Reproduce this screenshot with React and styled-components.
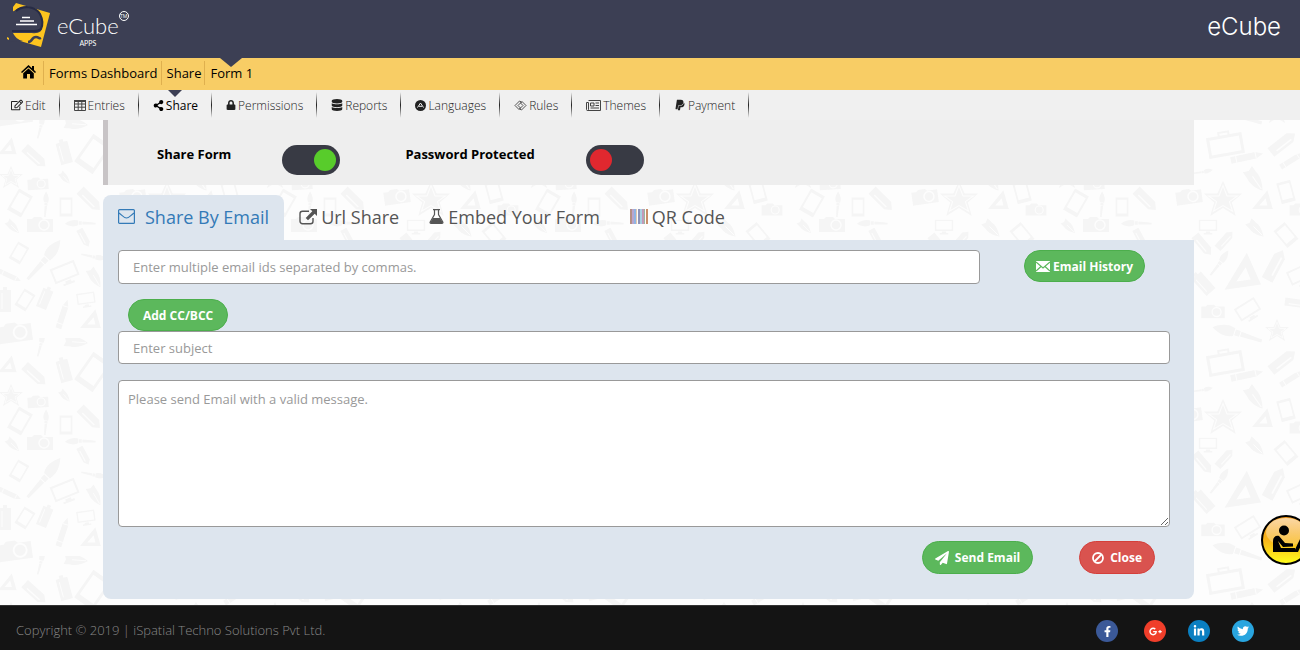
import React from "react";
import styled, { createGlobalStyle } from "styled-components";
import {
  FaRegEdit,
  FaShareAlt,
  FaLock,
  FaDatabase,
  FaPaypal,
  FaPaperPlane,
  FaFacebookF,
  FaGooglePlusG,
  FaLinkedinIn,
  FaTwitter,
} from "react-icons/fa";

const GlobalStyle = createGlobalStyle`
  * {
    box-sizing: border-box;
  }

  body {
    margin: 0;
    background: #fdfdfd;
    font-family: "Open Sans", "Liberation Sans", sans-serif;
    font-size: 13px;
    color: #000;
  }

  a {
    color: inherit;
    text-decoration: none;
  }

  input, textarea, button {
    font-family: inherit;
  }
`;

const Page = styled.div`
  position: relative;
  display: flex;
  flex-direction: column;
  min-height: 100vh;
  overflow: hidden;
`;

/* header */

const Header = styled.header`
  display: flex;
  justify-content: space-between;
  height: 58px;
  padding: 0 19px 0 7px;
  background: #3c3f54;
  color: #fff;
`;

const Brand = styled.a`
  display: flex;
  align-items: flex-start;
  padding-top: 3px;
`;

const BrandText = styled.span`
  display: flex;
  flex-direction: column;
  align-items: center;
  margin-left: 6px;
  padding-top: 10px;
`;

const BrandName = styled.span`
  font-family: Lato, sans-serif;
  font-size: 22px;
  font-weight: 300;
  line-height: 26px;
`;

const BrandSub = styled.span`
  font-family: Lato, sans-serif;
  font-size: 7px;
  line-height: 9px;
`;

const TradeMark = styled.span`
  display: flex;
  align-items: center;
  justify-content: center;
  width: 10px;
  height: 10px;
  margin-top: 8px;
  border: 1px solid #fff;
  border-radius: 50%;
  font-size: 5px;
`;

const HeaderTitle = styled.h1`
  margin: 0;
  font-family: Inter, sans-serif;
  font-size: 24px;
  font-weight: 300;
  line-height: 54px;
`;

/* navigation */

const Breadcrumb = styled.nav`
  display: flex;
  align-items: flex-start;
  height: 32px;
  padding: 3px 0 0 21px;
  background: #f8cd65;
`;

const Crumb = styled.a`
  position: relative;
  display: flex;
  align-items: center;
  height: 24px;
  padding: 0 3px 0 5px;
  border-left: ${(props) => (props.$first ? "none" : "1px solid #dfb04e")};
  ${(props) => props.$first && "padding: 0 7px 2px 0;"}
`;

const Arrow = styled.span`
  position: absolute;
  left: 50%;
  top: ${(props) => (props.$small ? 0 : -3)}px;
  margin-left: -${(props) => props.$size}px;
  border: ${(props) => props.$size}px solid transparent;
  border-top: ${(props) => (props.$small ? 7 : 9)}px solid #3c3f54;
  border-bottom: none;
`;

const Menu = styled.nav`
  display: flex;
  height: 30px;
  background: #f0f0f0;
`;

const MenuItem = styled.a`
  position: relative;
  display: flex;
  align-items: center;
  gap: 2px;
  padding: 0 13px 0 14px;
  border-right: 1px solid;
  border-image: linear-gradient(#f0f0f0 10%, #222 50%, #f0f0f0 90%) 1;
  font-size: 12px;
  font-weight: ${(props) => (props.$active ? 400 : 300)};
  color: ${(props) => (props.$active ? "#000" : "#222")};

  &:first-child {
    padding-left: 11px;
  }
`;

/* body */

const Main = styled.main`
  position: relative;
  flex: 1;
  padding: 0 106px 6px 103px;
`;

const Backdrop = styled.svg`
  position: absolute;
  inset: 0;
  width: 100%;
  height: 100%;
`;

const Content = styled.div`
  position: relative;
`;

const StatusBar = styled.section`
  display: flex;
  height: 65px;
  padding: 25px 0 0 49px;
  border-left: 5px solid #c8c4c6;
  background: #eee;
`;

const Setting = styled.label`
  display: flex;
  gap: 51px;
  margin-right: 65px;
  font-weight: 700;
  line-height: 18px;
`;

const Toggle = styled.input`
  appearance: none;
  width: 58px;
  height: 30px;
  margin: 0;
  padding: 4px;
  border-radius: 15px;
  background: #383a44;

  &::before {
    content: "";
    display: block;
    width: 22px;
    height: 22px;
    border-radius: 50%;
    background: #e0282f;
  }

  &:checked::before {
    margin-left: auto;
    background: #58cc2b;
  }
`;

const Tabs = styled.div`
  display: flex;
  margin-top: 10px;
`;

const Tab = styled.button`
  display: flex;
  align-items: center;
  gap: ${(props) => (props.$active ? 10 : 4)}px;
  height: 45px;
  padding: 0 15px 2px;
  border: none;
  border-radius: 8px 8px 0 0;
  background: ${(props) => (props.$active ? "#dde5ee" : "transparent")};
  color: ${(props) => (props.$active ? "#337ab7" : "#555")};
  font-size: 18px;
  font-weight: 500;
`;

const EmailForm = styled.form`
  display: flex;
  flex-direction: column;
  padding: 10px 24px 25px 15px;
  border-radius: 0 0 8px 8px;
  background: #dde5ee;
`;

const Row = styled.div`
  display: flex;
  justify-content: ${(props) => (props.$end ? "flex-end" : "flex-start")};
  gap: ${(props) => props.$gap || 0}px;
  padding: ${(props) => props.$pad || 0};
`;

const Field = styled.input`
  flex: ${(props) => (props.$grow ? 1 : "none")};
  height: ${(props) => (props.$grow ? 34 : 33)}px;
  padding: 0 14px;
  border: 1px solid #999;
  border-radius: 4px;
  background: #fff;
  font-size: 13px;

  &::placeholder {
    color: #999;
  }
`;

const Message = styled.textarea`
  height: 147px;
  margin: 16px 0 14px;
  padding: 10px 9px;
  border: 1px solid #999;
  border-radius: 4px;
  font-size: 13px;
  line-height: 17px;
  resize: vertical;

  &::placeholder {
    color: #999;
  }
`;

const Button = styled.button`
  display: flex;
  align-items: center;
  gap: ${(props) => props.$gap || 3}px;
  height: ${(props) => (props.$tall ? 33 : 32)}px;
  padding: 0 ${(props) => props.$side || 11}px;
  border: 1px solid ${(props) => (props.$danger ? "#d43f3a" : "#4cae4c")};
  border-radius: 17px;
  background: ${(props) => (props.$danger ? "#d9534f" : "#5cb85c")};
  color: #fff;
  font-size: 12px;
  font-weight: 700;
`;

const HelpBadge = styled.a`
  position: fixed;
  right: -11px;
  bottom: 85px;
  width: 50px;
  height: 50px;
`;

/* footer */

const Footer = styled.footer`
  position: relative;
  display: flex;
  justify-content: space-between;
  height: 45px;
  padding: 0 46px 0 16px;
  border-top: 1px solid #333;
  background: #141414;
  color: #888;
  font-weight: 300;
  line-height: 48px;
`;

const Social = styled.div`
  display: flex;
  gap: 22px;
  padding-top: 14px;
`;

const SocialLink = styled.a`
  display: flex;
  align-items: center;
  justify-content: center;
  width: 22px;
  height: 22px;
  border-radius: 50%;
  background: ${(props) => props.$color};
  color: #fff;

  &:first-child {
    margin-right: 4px;
  }
`;

/* icons */

const LogoMark = () => (
  <svg width="44" height="45" viewBox="0 0 44 45" aria-hidden="true">
    <path d="M9 0 43 10 34 44 6 36V4Z" fill="#fdc41f" />
    <path d="M0 38V10L7 8C14 2 28 2 33 11c3 6 3 12 1 17-3 3-8 2-12 2H6c2 4 5 7 10 8-6 2-12 0-16 0Z" fill="#3c3f54" />
    <path d="M9 8C16 2 28 3 33 11c3 6 3 11 1 15-3 3-7 2-11 2H5" fill="none" stroke="#272b45" strokeWidth="2" />
    <path d="M21 39c5 0 3-5 8-5 3 0 3 2 5 1" fill="none" stroke="#3c3f54" strokeWidth="2.500" />
    <path d="M15 14.500h8M13 18h14M9 21.500h21" stroke="#fff" strokeWidth="1.300" />
    <path d="M0 34l2 1v2l-2-1z" fill="#fdc41f" />
  </svg>
);

const HomeIcon = () => (
  <svg width="15" height="14" viewBox="0 0 15 14" aria-hidden="true">
    <path d="M7.500 0 11 3.200V1h2v4l2 2-1 1-6.500-5.800L1 8 0 7Z" />
    <path d="m7.500 3.500 5.300 4.700V13.500H9V9H6v4.500H2.200V8.200Z" />
  </svg>
);

const TableIcon = () => (
  <svg width="12" height="11" viewBox="0 0 12 11" aria-hidden="true">
    <path d="M.5 1h11v9.500H.5ZM.5 4h11M.5 7.200h11M4.200 1v9.500M7.800 1v9.500" fill="none" stroke="#444" />
    <path d="M0 0h12v2H0z" fill="#444" />
  </svg>
);

const LanguageIcon = () => (
  <svg width="11" height="11" viewBox="0 0 11 11" aria-hidden="true">
    <circle cx="5.500" cy="5.500" r="5.500" fill="#222" />
    <path d="M2.500 7.500 5.500 3l3 4.500M4 6.300h3" fill="none" stroke="#f0f0f0" />
  </svg>
);

const RulesIcon = () => (
  <svg width="13" height="11" viewBox="0 0 13 11" aria-hidden="true">
    <path d="M5.500 1 1 5.500l4 4L6.500 8 4 5.500 7.500 2ZM7.500 10 12 5.500l-4-4L6.500 3 9 5.500 5.500 9Z" fill="none" stroke="#444" strokeWidth=".9" />
  </svg>
);

const NewsIcon = () => (
  <svg width="15" height="11" viewBox="0 0 15 11" aria-hidden="true">
    <path d="M2.500.5h12v10h-13a1 1 0 0 1-1-1v-7h2v7a1 1 0 0 1-1 1" fill="none" stroke="#444" />
    <path d="M4.500 3h3.500v3H4.500ZM9.500 3h3.500M9.500 5.500h3.500M4.500 8h8.500" fill="none" stroke="#444" />
  </svg>
);

const EnvelopeOutline = () => (
  <svg width="17" height="15" viewBox="0 0 17 15" aria-hidden="true">
    <rect x=".6" y=".6" width="15.800" height="13.800" rx="1" fill="none" stroke="#337ab7" strokeWidth="1.200" />
    <path d="M1 4c3 2 5 5 7.500 5S13 6 16 4" fill="none" stroke="#337ab7" strokeWidth="1.200" />
  </svg>
);

const ExternalIcon = () => (
  <svg width="18" height="16" viewBox="0 0 18 16" aria-hidden="true">
    <path d="M10 2.200H3.500A2.500 2.500 0 0 0 1 4.700v7.600a2.500 2.500 0 0 0 2.500 2.500h8a2.500 2.500 0 0 0 2.500-2.500V9" fill="none" stroke="#555" strokeWidth="1.400" />
    <path d="M11 0h7v7l-2.300-2.300L9 11.300 6.700 9l6.600-6.700Z" fill="#555" />
  </svg>
);

const FlaskIcon = () => (
  <svg width="15" height="15" viewBox="0 0 15 15" aria-hidden="true">
    <path d="M4 .6h7M5.500.6v5L1.200 13c-.4.800 0 1.400.8 1.400h11c.8 0 1.200-.6.8-1.400L9.500 5.600v-5" fill="none" stroke="#555" strokeWidth="1.200" />
    <path d="M4 9h7l3 5H1Z" fill="#555" />
  </svg>
);

const barColors = ["#b58f86", "#b9a6cf", "#8fb4e3", "#e3c9b0", "#8d93b8", "#a9d0e3", "#c39ab8", "#9db8a0", "#c98f6a"];

const BarcodeIcon = () => (
  <svg width="18" height="15" viewBox="0 0 18 15" aria-hidden="true">
    {barColors.map((color, i) => (
      <rect key={color} x={i * 2} width={i % 4 === 3 ? 1 : 2} height="15" fill={color} />
    ))}
  </svg>
);

const EnvelopeSolid = () => (
  <svg width="14" height="11" viewBox="0 0 14 11" aria-hidden="true">
    <path d="M0 0h14v11H0z" fill="#fff" />
    <path d="m0 1 7 6 7-6M0 10l5-4.500M14 10 9 5.500" fill="none" stroke="#5cb85c" strokeWidth="1.200" />
  </svg>
);

const BanIcon = () => (
  <svg width="12" height="12" viewBox="0 0 12 12" aria-hidden="true">
    <circle cx="6" cy="6" r="5" fill="none" stroke="#fff" strokeWidth="1.800" />
    <path d="m2.500 9.500 7-7" stroke="#fff" strokeWidth="1.800" />
  </svg>
);

const HelpIcon = () => (
  <svg width="50" height="50" viewBox="0 0 50 50" aria-hidden="true">
    <defs>
      <linearGradient id="gold" x1="0" y1="0" x2="0" y2="1">
        <stop offset="0" stopColor="#f59a1c" />
        <stop offset=".5" stopColor="#f8b51b" />
        <stop offset="1" stopColor="#ffff1c" />
      </linearGradient>
      <linearGradient id="shine" x1="0" y1="0" x2="0" y2="1">
        <stop offset="0" stopColor="#fff" stopOpacity=".6" />
        <stop offset="1" stopColor="#fff" stopOpacity=".15" />
      </linearGradient>
    </defs>
    <circle cx="25" cy="25" r="24" fill="url(#gold)" stroke="#000" strokeWidth="2" />
    <ellipse cx="25" cy="17" rx="20" ry="14" fill="url(#shine)" />
    <circle cx="23" cy="15.500" r="5" />
    <path d="M12 37V26c0-4 3-6 6-5l6 7 8 .5v3l-10 .5-5-6 3 7h14v4Z" />
    <path d="M24 34.500h10L40 22h4l-7 15H24Z" />
  </svg>
);

/* doodle wallpaper: [kind, x, y, rotation, scale] */

const shapes = {
  camera: (
    <>
      <path d="M-13-6h5l2-2h7l2 2h10V7h-26Z" />
      <circle cx="4" cy="0" r="5" fill="none" stroke="#fdfdfd" strokeWidth="1.500" />
    </>
  ),
  tablet: <path fillRule="evenodd" d="M-8-12H8v24H-8ZM-6-9v17H6V-9Z" />,
  star: (
    <>
      <path d="m0-12 3.500 8H12L5.500 1.500 8 10 0 5-8 10l2.500-8.500L-12-4h8.500Z" />
      <path d="m0-9 2.500 6.500H9L4 1l2 6-6-3.500L-6 7l2-6-5-3.500h6.500Z" fill="none" stroke="#fdfdfd" strokeWidth=".7" />
    </>
  ),
  nib: (
    <>
      <path d="M-12-5l7 0C0-6 6-4 12 0 6 4 0 6-5 5h-7l2-5Z" />
      <path d="M-4 0H10" stroke="#fdfdfd" />
    </>
  ),
  marker: (
    <>
      <path d="M-14-5H8l6 5-6 5h-22Z" />
      <path d="M-9 2H8" stroke="#fdfdfd" strokeWidth="1.500" />
    </>
  ),
  brush: <path d="M-26-1.500-4-2.500v5l-22-1ZM-3-3h5v6h-5ZM3-4c8-4 14-2 22 2C18 4 10 6 3 4Z" />,
  pencil: (
    <>
      <path d="M-15-3H8l7 3-7 3h-23Z" />
      <path d="M-10-3v6M8-3v6" stroke="#fdfdfd" />
    </>
  ),
  triangle: <path fillRule="evenodd" d="M-11 9 6-12l6 21ZM-3 5h9L4-3Z" />,
  monitor: <path fillRule="evenodd" d="M-13-9h26V7H-13ZM-11-7V5h22V-7ZM-3 8h6v2h3v2H-6v-2h3Z" />,
  bottle: (
    <>
      <path d="M-2-13h4v3h4v22H-6v-22h4Z" />
      <path d="M-3-7V9" stroke="#fdfdfd" />
    </>
  ),
  briefcase: <path fillRule="evenodd" d="M-18-8h12v-4H6v4h12v21h-36ZM-15-5v15h30V-5ZM-4-8h8v-2h-8Z" />,
};

const doodles = [
  ["camera", 15, 213, -8, 1.3],
  ["brush", 41, 6, -75, 0.5],
  ["nib", 76, 4, 5, 1],
  ["triangle", 7, 27, 0, 0.8],
  ["marker", 35, 37, 42, 1],
  ["bottle", 64, 32, -15, 1],
  ["tablet", 93, 34, 35, 1.4],
  ["star", 11, 58, 0, 1],
  ["camera", 38, 64, -3, 0.8],
  ["nib", 65, 58, 50, 0.6],
  ["tablet", 20, 83, 30, 1],
  ["brush", 46, 84, -85, 0.5],
  ["tablet", 66, 87, 0, 0.8],
  ["marker", 90, 80, 45, 1],
  ["nib", 13, 107, 45, 0.7],
  ["camera", 40, 105, 0, 1],
  ["brush", 80, 103, 182, 0.6],
  ["marker", 84, 118, 62, 0.7],
  ["tablet", 19, 133, 30, 0.8],
  ["brush", 45, 140, -48, 1],
  ["monitor", 65, 153, -22, 1],
  ["brush", 94, 137, 12, 0.5],
  ["nib", 95, 158, 60, 0.9],
  ["pencil", 10, 156, 25, 0.8],
  ["bottle", 5, 180, 0, 1],
  ["tablet", 25, 180, 32, 0.8],
  ["bottle", 45, 178, 22, 0.9],
  ["monitor", 86, 179, -8, 0.7],
  ["pencil", 63, 194, -72, 1],
  ["triangle", 90, 200, 0, 0.9],
  ["briefcase", 169, 23, -10, 1],
  ["pencil", 191, 37, -12, 1.1],
  ["marker", 227, 23, -38, 1.1],
  ["pencil", 236, 40, -32, 0.9],
  ["brush", 147, 52, -8, 0.4],
  ["nib", 199, 60, 55, 1.1],
  ["star", 167, 80, 0, 1.6],
  ["camera", 133, 77, -8, 1],
  ["triangle", 206, 81, 0, 0.9],
  ["tablet", 230, 72, -15, 0.9],
  ["camera", 244, 90, 0, 0.8],
  ["monitor", 152, 106, 0, 0.7],
  ["marker", 169, 120, -48, 0.8],
  ["nib", 200, 109, 45, 0.9],
  ["tablet", 230, 115, -40, 0.9],
  ["marker", 147, 125, 50, 0.9],
  ["brush", 164, 143, -52, 0.6],
  ["triangle", 184, 153, -8, 1.6],
  ["marker", 219, 145, -62, 1.2],
  ["monitor", 244, 155, -25, 0.9],
  ["bottle", 147, 163, -42, 1],
  ["camera", 157, 192, 0, 0.9],
  ["monitor", 192, 190, -32, 0.9],
  ["brush", 181, 213, 198, 1],
  ["star", 221, 211, 0, 1],
  ["marker", 240, 183, 8, 0.8],
];

const Doodle = ({ item: [kind, x, y, rotation, scale] }) => (
  <g transform={`translate(${x} ${y}) rotate(${rotation}) scale(${scale})`}>{shapes[kind]}</g>
);

// doodles that cross the tile's edge are drawn again one tile further up
const Wallpaper = () => (
  <Backdrop aria-hidden="true">
    <defs>
      <pattern id="doodles" width="264" height="218" patternUnits="userSpaceOnUse">
        <g fill="#f5f5f5">
          {doodles.map((item, i) => (
            <Doodle key={i} item={item} />
          ))}
          {doodles
            .filter((item) => item[2] > 195)
            .map((item, i) => (
              <Doodle key={i} item={[item[0], item[1], item[2] - 218, item[3], item[4]]} />
            ))}
        </g>
      </pattern>
    </defs>
    <rect width="100%" height="100%" fill="url(#doodles)" />
  </Backdrop>
);

const menuItems = [
  { label: "Edit", icon: <FaRegEdit size={12} /> },
  { label: "Entries", icon: <TableIcon /> },
  { label: "Share", icon: <FaShareAlt size={11} />, active: true },
  { label: "Permissions", icon: <FaLock size={10} /> },
  { label: "Reports", icon: <FaDatabase size={12} /> },
  { label: "Languages", icon: <LanguageIcon /> },
  { label: "Rules", icon: <RulesIcon /> },
  { label: "Themes", icon: <NewsIcon /> },
  { label: "Payment", icon: <FaPaypal size={12} /> },
];

const tabs = [
  { label: "Share By Email", icon: <EnvelopeOutline />, active: true },
  { label: "Url Share", icon: <ExternalIcon /> },
  { label: "Embed Your Form", icon: <FlaskIcon /> },
  { label: "QR Code", icon: <BarcodeIcon /> },
];

export default function App() {
  return (
    <Page>
      <GlobalStyle />
      <Header>
        <Brand href="#">
          <LogoMark />
          <BrandText>
            <BrandName>eCube</BrandName>
            <BrandSub>APPS</BrandSub>
          </BrandText>
          <TradeMark>TM</TradeMark>
        </Brand>
        <HeaderTitle>eCube</HeaderTitle>
      </Header>

      <Breadcrumb aria-label="Breadcrumb">
        <Crumb href="#" $first aria-label="Home">
          <HomeIcon />
        </Crumb>
        <Crumb href="#">Forms Dashboard</Crumb>
        <Crumb href="#">Share</Crumb>
        <Crumb href="#">
          Form 1
          <Arrow $size={11} />
        </Crumb>
      </Breadcrumb>

      <Menu aria-label="Form">
        {menuItems.map((item) => (
          <MenuItem key={item.label} href="#" $active={item.active}>
            {item.icon}
            {item.label}
            {item.active && <Arrow $size={7} $small />}
          </MenuItem>
        ))}
      </Menu>

      <Main>
        <Wallpaper />
        <Content>
          <StatusBar>
            <Setting>
              Share Form
              <Toggle type="checkbox" role="switch" defaultChecked />
            </Setting>
            <Setting>
              Password Protected
              <Toggle type="checkbox" role="switch" />
            </Setting>
          </StatusBar>

          <Tabs role="tablist">
            {tabs.map((tab) => (
              <Tab key={tab.label} type="button" role="tab" aria-selected={!!tab.active} $active={tab.active}>
                {tab.icon}
                {tab.label}
              </Tab>
            ))}
          </Tabs>

          <EmailForm onSubmit={(e) => e.preventDefault()}>
            <Row $gap={44} $pad="0 25px 0 0">
              <Field $grow aria-label="Email ids" placeholder="Enter multiple email ids separated by commas." />
              <Button type="button">
                <EnvelopeSolid />
                Email History
              </Button>
            </Row>
            <Row $pad="15px 10px 0">
              <Button type="button" $side={14}>
                Add CC/BCC
              </Button>
            </Row>
            <Field aria-label="Subject" placeholder="Enter subject" />
            <Message aria-label="Message" placeholder="Please send Email with a valid message." />
            <Row $end $gap={46} $pad="0 15px 0 0">
              <Button type="submit" $tall $gap={6} $side={12}>
                <FaPaperPlane size={14} />
                Send Email
              </Button>
              <Button type="button" $tall $danger $gap={6} $side={12}>
                <BanIcon />
                Close
              </Button>
            </Row>
          </EmailForm>
        </Content>
      </Main>

      <Footer>
        <span>Copyright © 2019 | iSpatial Techno Solutions Pvt Ltd.</span>
        <Social>
          <SocialLink href="#" aria-label="Facebook" $color="#3b5998">
            <FaFacebookF size={11} />
          </SocialLink>
          <SocialLink href="#" aria-label="Google Plus" $color="#f03e2a">
            <FaGooglePlusG size={13} />
          </SocialLink>
          <SocialLink href="#" aria-label="LinkedIn" $color="#0a7fc1">
            <FaLinkedinIn size={12} />
          </SocialLink>
          <SocialLink href="#" aria-label="Twitter" $color="#29a5df">
            <FaTwitter size={12} />
          </SocialLink>
        </Social>
      </Footer>

      <HelpBadge href="#" aria-label="Help">
        <HelpIcon />
      </HelpBadge>
    </Page>
  );
}
